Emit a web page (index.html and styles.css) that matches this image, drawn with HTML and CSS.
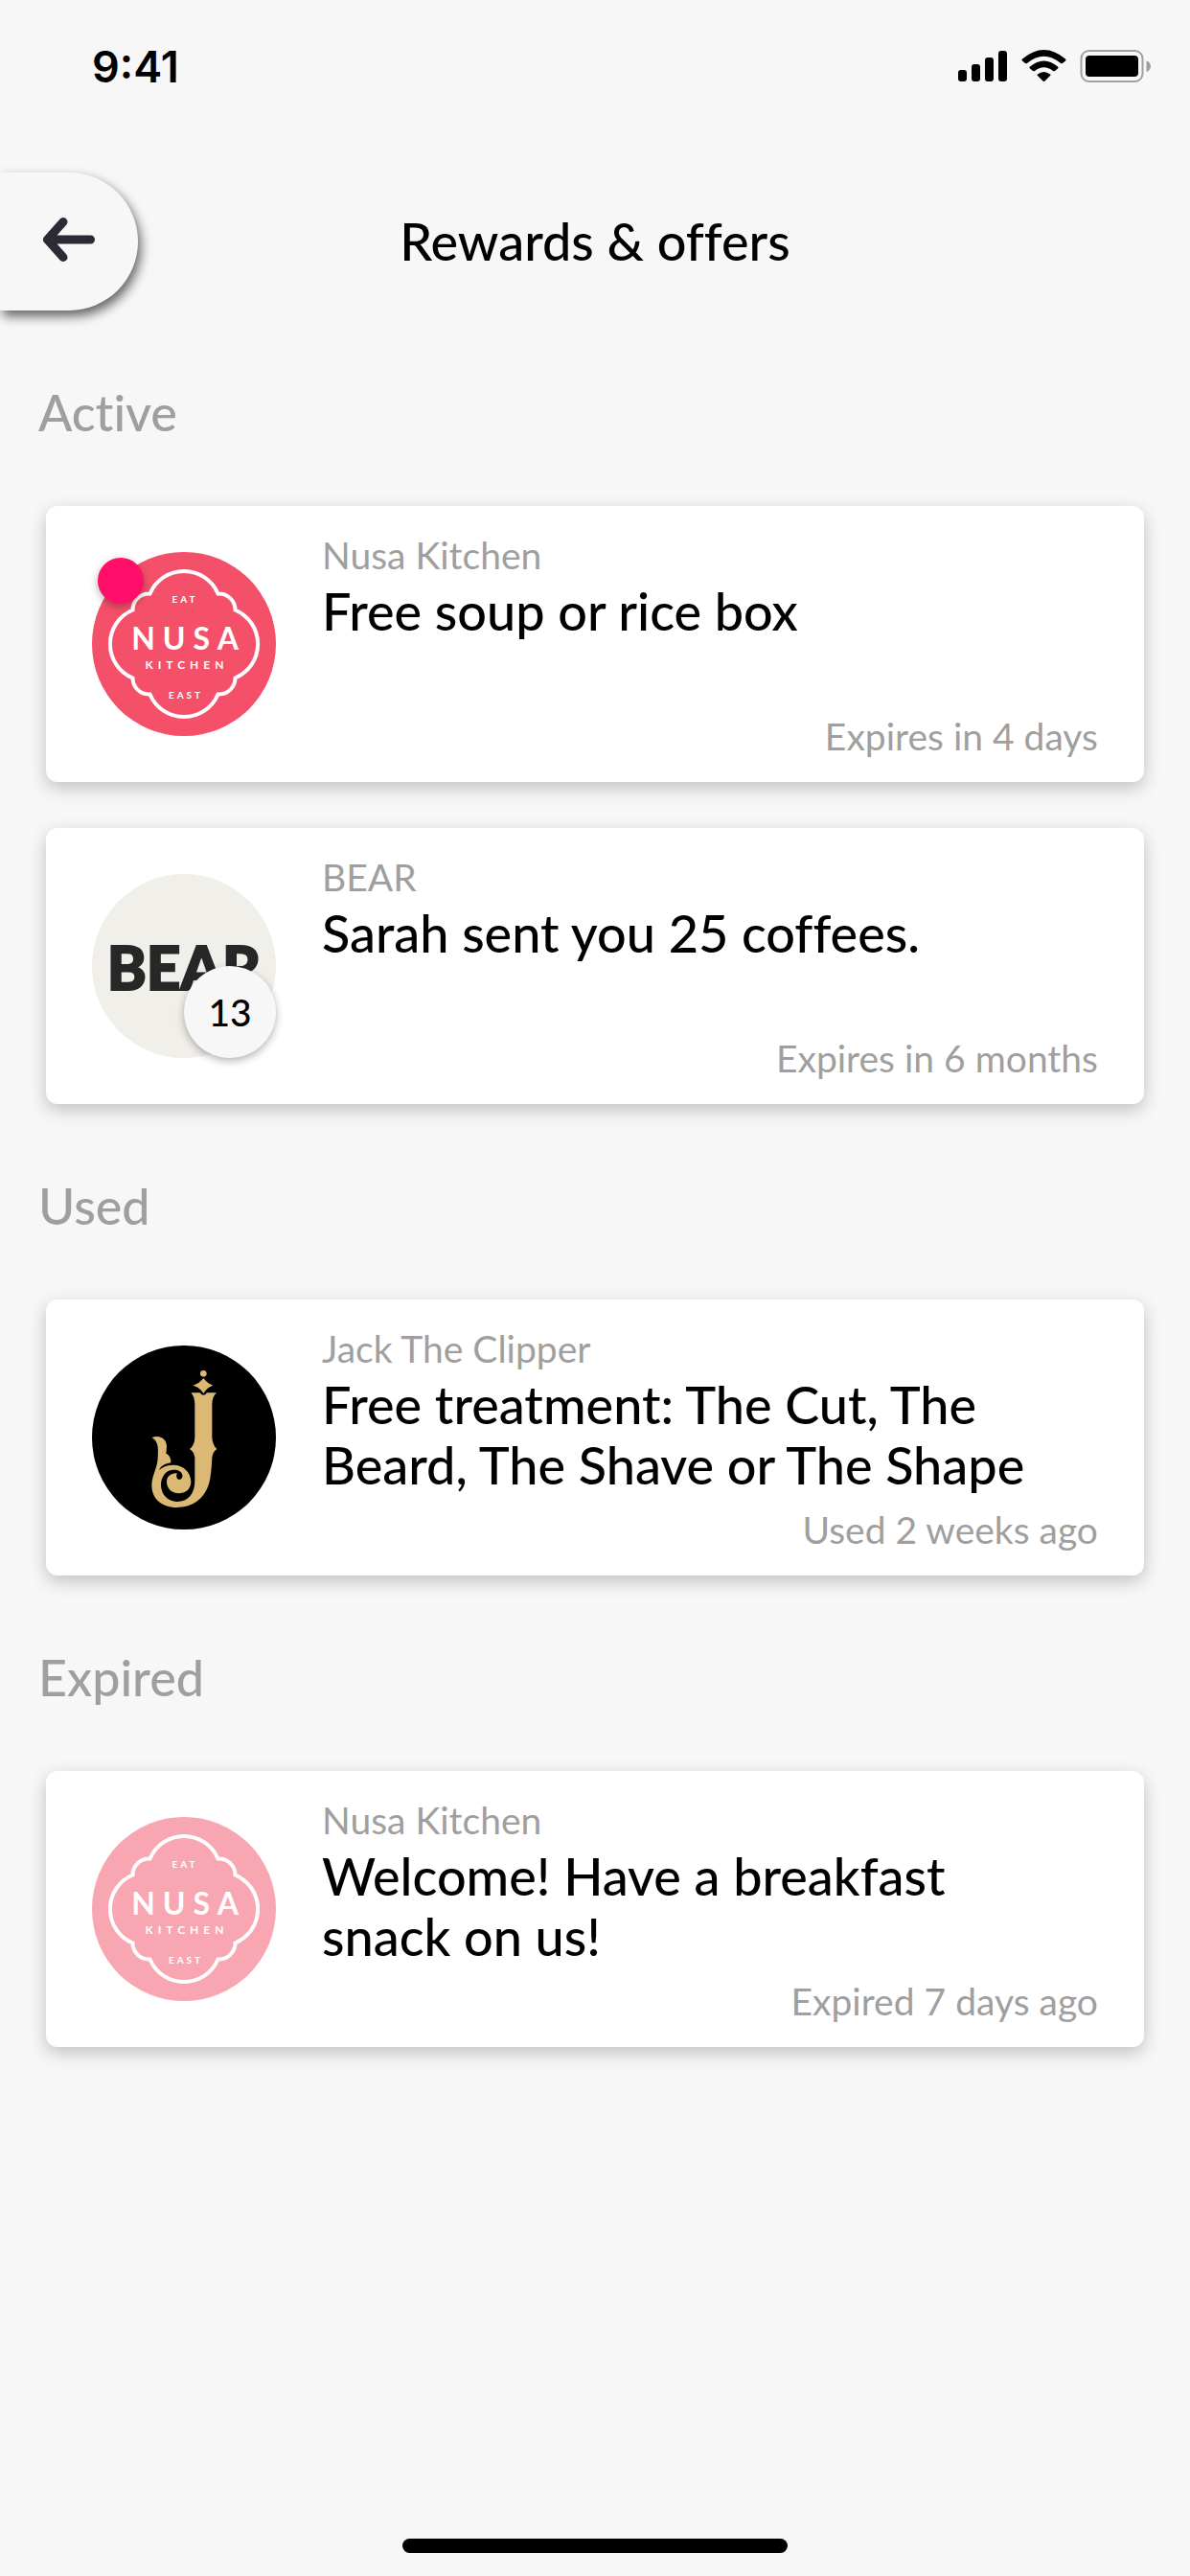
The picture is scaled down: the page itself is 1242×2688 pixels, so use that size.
FILE: index.html
```html
<!DOCTYPE html>
<html lang="en">
<head>
<meta charset="utf-8">
<meta name="viewport" content="width=device-width, initial-scale=1">
<title>Rewards &amp; offers</title>
<link rel="stylesheet" href="styles.css">
</head>
<body>
<div class="screen">
  <div class="status">
    <span class="time">9:41</span>
    <svg class="indicators" width="204" height="36" viewBox="0 0 204 36" aria-hidden="true">
      <rect x="1" y="21" width="9" height="12" rx="3"/>
      <rect x="15" y="15" width="9" height="18" rx="3"/>
      <rect x="29" y="8" width="9" height="25" rx="3"/>
      <rect x="43" y="1" width="9" height="32" rx="3"/>
      <path d="M68 9.500Q90.500-9.500 113 9.500Q114 10.500 113 11.500L110 14Q109 14.500 108 14Q90.500-.5 73 14Q72 14.500 71 14L68 11.500Q67 10.500 68 9.500ZM76 17.500Q90.500 5.500 105 17.500Q106 18.500 105 19.500L102 22Q101 22.500 100 22Q90.500 14.500 81 22Q80 22.500 79 22L76 19.500Q75 18.500 76 17.500ZM84 25.500Q90.500 20.500 97 25.500Q98 26 97 27L91.500 32.500Q90.500 33.500 89.500 32.500L84 27Q83 26 84 25.500Z"/>
      <rect x="129.500" y="1" width="64" height="32" rx="8" fill="none" stroke="#a0a0a0" stroke-width="2"/>
      <rect x="134" y="6" width="55" height="22" rx="4"/>
      <path d="M197.500 11.500C203.500 13 203.500 21.500 197.500 23Z" fill="#a0a0a0"/>
    </svg>
  </div>
  <header class="header">
    <button class="back" type="button" aria-label="Back">
      <svg width="54" height="48" viewBox="0 0 54 48" aria-hidden="true"><path d="M49.500 24H5M21 5.500L4.500 24L21 42.500" fill="none" stroke="#2c2b35" stroke-width="9" stroke-linecap="round" stroke-linejoin="round"/></svg>
    </button>
    <h1 class="title">Rewards &amp; offers</h1>
  </header>
  <main class="content">
    <section class="section">
      <h2 class="section-title">Active</h2>
      <article class="card">
        <div class="logo">
          <svg viewBox="0 0 192 192" role="img" aria-label="Nusa Kitchen logo">
            <circle cx="96" cy="96" r="96" fill="#f5506a"/>
            <path d="M60.500 43.500A38.500 38.500 0 0 1 131.500 43.500A17 17 0 0 1 149.500 60.500A38.500 38.500 0 0 1 149.500 131.500A17 17 0 0 1 131.500 148.500A38.500 38.500 0 0 1 60.500 148.500A17 17 0 0 1 42.500 131.500A38.500 38.500 0 0 1 42.500 60.500A17 17 0 0 1 60.500 43.500Z" fill="none" stroke="#fff" stroke-width="4"/>
            <g class="nusa-text" fill="#fff" text-anchor="middle">
              <text class="tiny" x="97" y="53">EAT</text>
              <text class="big" x="101" y="102">NUSA</text>
              <text class="mid" x="99" y="122">KITCHEN</text>
              <text class="tiny" x="98" y="153">EAST</text>
            </g>
          </svg>
          <span class="dot"></span>
        </div>
        <div class="card-body">
          <p class="vendor">Nusa Kitchen</p>
          <h3 class="offer">Free soup or rice box</h3>
          <p class="when">Expires in 4 days</p>
        </div>
      </article>
      <article class="card">
        <div class="logo">
          <svg viewBox="0 0 192 192" role="img" aria-label="BEAR logo"><circle cx="96" cy="96" r="96" fill="#f0efea"/><text class="bear" x="96" y="121" text-anchor="middle">BEAR</text></svg>
          <span class="count">13</span>
        </div>
        <div class="card-body">
          <p class="vendor">BEAR</p>
          <h3 class="offer">Sarah sent you 25 coffees.</h3>
          <p class="when">Expires in 6 months</p>
        </div>
      </article>
    </section>
    <section class="section">
      <h2 class="section-title">Used</h2>
      <article class="card">
        <div class="logo">
          <svg viewBox="0 0 192 192" role="img" aria-label="Jack The Clipper logo">
            <circle cx="96" cy="96" r="96"/>
            <g transform="translate(-16 -19) scale(.33333)" fill="#dbb873">
              <circle cx="397" cy="145" r="10"/>
              <path d="M397 159Q408 175 427 182Q408 188 397 207Q386 188 364 182Q386 175 397 159Z"/>
              <path d="M358 205H386Q397 220 408 205H438Q425 216 424 240V345Q426 370 439 381Q426 390 424 408Q422 460 415 487C400 540 360 564 313 564C265 564 235 535 235 495C235 465 253 440 254 410C255 380 258 360 236 345C260 336 283 350 282 375Q281 387 280 395Q295 400 295 424C275 427 263 435 258 447C270 436 285 431 303 431C335 431 358 455 358 484C358 507 340 520 319 520C298 520 282 505 282 484C282 467 295 456 314 457Q309 474 321 477C332 477 334 463 328 455C318 445 305 446 297 447C278 449 263 470 264 496C266 525 285 545 314 546C350 546 370 520 370 480V408Q368 390 354 381Q369 370 370 345V240Q369 216 358 205Z"/>
            </g>
          </svg>
        </div>
        <div class="card-body">
          <p class="vendor">Jack The Clipper</p>
          <h3 class="offer">Free treatment: The Cut, The Beard, The Shave or The Shape</h3>
          <p class="when">Used 2 weeks ago</p>
        </div>
      </article>
    </section>
    <section class="section">
      <h2 class="section-title">Expired</h2>
      <article class="card">
        <div class="logo faded">
          <svg viewBox="0 0 192 192" role="img" aria-label="Nusa Kitchen logo">
            <circle cx="96" cy="96" r="96" fill="#f5506a"/>
            <path d="M60.500 43.500A38.500 38.500 0 0 1 131.500 43.500A17 17 0 0 1 149.500 60.500A38.500 38.500 0 0 1 149.500 131.500A17 17 0 0 1 131.500 148.500A38.500 38.500 0 0 1 60.500 148.500A17 17 0 0 1 42.500 131.500A38.500 38.500 0 0 1 42.500 60.500A17 17 0 0 1 60.500 43.500Z" fill="none" stroke="#fff" stroke-width="4"/>
            <g class="nusa-text" fill="#fff" text-anchor="middle">
              <text class="tiny" x="97" y="53">EAT</text>
              <text class="big" x="101" y="102">NUSA</text>
              <text class="mid" x="99" y="122">KITCHEN</text>
              <text class="tiny" x="98" y="153">EAST</text>
            </g>
          </svg>
        </div>
        <div class="card-body">
          <p class="vendor">Nusa Kitchen</p>
          <h3 class="offer">Welcome! Have a breakfast snack on us!</h3>
          <p class="when">Expired 7 days ago</p>
        </div>
      </article>
    </section>
  </main>
  <div class="home-bar"></div>
</div>
</body>
</html>
```
FILE: styles.css
```css
* {
  box-sizing: border-box;
}

body {
  margin: 0;
  background: #f7f7f7;
  color: #000;
  font-family: Lato, "Open Sans", sans-serif;
  font-variant-ligatures: none;
}

h1, h2, h3, p {
  margin: 0;
  font-weight: 500;
}

.screen {
  display: flex;
  flex-direction: column;
  min-height: 100vh;
  padding-bottom: 24px;
}

.status {
  display: flex;
  justify-content: space-between;
  align-items: center;
  height: 140px;
  padding: 0 39px 0 96px;
}

.time {
  font: 600 45px/56px Inter, sans-serif;
}

.indicators {
  display: block;
}

.header {
  display: grid;
  grid-template-columns: 144px 1fr 144px;
  align-items: center;
  margin-top: 40px;
}

.back {
  display: flex;
  align-items: center;
  justify-content: flex-end;
  height: 144px;
  padding: 0 45px 4px 0;
  border: 0;
  border-radius: 0 72px 72px 0;
  background: #f7f7f7;
  box-shadow: 3px 6px 12px rgba(0, 0, 0, 0.6);
}

.title {
  font-size: 54px;
  line-height: 64px;
  text-align: center;
}

.content {
  padding: 0 48px;
}

.section {
  display: flex;
  flex-direction: column;
  gap: 48px;
  padding-top: 74px;
}

.section-title {
  margin: 0 0 18px -8px;
  color: #9f9f9f;
  font-size: 52px;
  line-height: 64px;
}

.card {
  display: flex;
  gap: 48px;
  min-height: 288px;
  padding: 0 48px;
  border-radius: 12px;
  background: #fff;
  box-shadow: 0 6px 18px rgba(0, 0, 0, 0.22);
}

.logo {
  position: relative;
  flex: none;
  width: 192px;
  height: 192px;
  margin-top: 48px;
}

.logo svg {
  display: block;
  width: 100%;
  height: 100%;
}

.faded svg {
  opacity: 0.5;
}

.nusa-text {
  font-family: Lato, sans-serif;
  font-weight: 700;
}

.tiny {
  font-size: 10px;
  letter-spacing: 3px;
}

.mid {
  font-size: 12px;
  letter-spacing: 5px;
}

.big {
  font-size: 32px;
  letter-spacing: 8px;
}

.bear {
  fill: #272727;
  stroke: #272727;
  stroke-width: 2px;
  font: 900 62px Lato, sans-serif;
}

.dot {
  position: absolute;
  top: 6px;
  left: 6px;
  width: 48px;
  height: 48px;
  border-radius: 50%;
  background: #ff0f69;
  box-shadow: 0 3px 9px rgba(0, 0, 0, 0.3);
}

.count {
  position: absolute;
  right: 0;
  bottom: 0;
  width: 96px;
  height: 96px;
  border-radius: 50%;
  background: #f7f7f7;
  box-shadow: 0 3px 9px rgba(0, 0, 0, 0.3);
  font-size: 39px;
  font-weight: 500;
  line-height: 96px;
  text-align: center;
}

.card-body {
  display: flex;
  flex: 1;
  flex-direction: column;
  min-width: 0;
  padding: 24px 0 21px;
}

.vendor,
.when {
  color: #9f9f9f;
  font-size: 39px;
  font-weight: 400;
  line-height: 54px;
}

.offer {
  max-width: 760px;
  font-size: 54px;
  line-height: 63px;
}

.when {
  margin-top: auto;
  text-align: right;
}

.home-bar {
  width: 402px;
  height: 15px;
  margin: auto auto 0;
  border-radius: 8px;
  background: #000;
}
```
